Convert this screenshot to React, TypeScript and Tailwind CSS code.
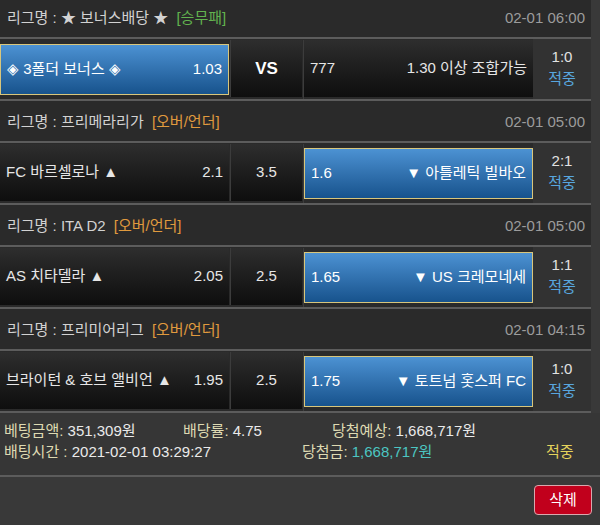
import React from "react";

interface Match {
  league: string;
  tag: string;
  tagColor: string;
  date: string;
  home: string;
  homeOdd: string;
  mid: string;
  midBold?: boolean;
  away: string;
  awayOdd: string;
  pick: "home" | "away";
  score: string;
}

const matches: Match[] = [
  {
    league: "★ 보너스배당 ★",
    tag: "[승무패]",
    tagColor: "text-[#62b34f]",
    date: "02-01 06:00",
    home: "◈ 3폴더 보너스 ◈",
    homeOdd: "1.03",
    mid: "VS",
    midBold: true,
    away: "1.30 이상 조합가능",
    awayOdd: "777",
    pick: "home",
    score: "1:0",
  },
  {
    league: "프리메라리가",
    tag: "[오버/언더]",
    tagColor: "text-[#e09a3e]",
    date: "02-01 05:00",
    home: "FC 바르셀로나 ▲",
    homeOdd: "2.1",
    mid: "3.5",
    away: "▼ 아틀레틱 빌바오",
    awayOdd: "1.6",
    pick: "away",
    score: "2:1",
  },
  {
    league: "ITA D2",
    tag: "[오버/언더]",
    tagColor: "text-[#e09a3e]",
    date: "02-01 05:00",
    home: "AS 치타델라 ▲",
    homeOdd: "2.05",
    mid: "2.5",
    away: "▼ US 크레모네세",
    awayOdd: "1.65",
    pick: "away",
    score: "1:1",
  },
  {
    league: "프리미어리그",
    tag: "[오버/언더]",
    tagColor: "text-[#e09a3e]",
    date: "02-01 04:15",
    home: "브라이턴 & 호브 앨비언 ▲",
    homeOdd: "1.95",
    mid: "2.5",
    away: "▼ 토트넘 홋스퍼 FC",
    awayOdd: "1.75",
    pick: "away",
    score: "1:0",
  },
];

// one odds box, blue with a gold edge when it is the picked side
function Cell({ selected, children }: { selected: boolean; children: React.ReactNode }) {
  if (selected) {
    return (
      <div className="w-[229px] h-[51px] mt-[4px] flex items-center justify-between px-[6px] border border-[#d8c67c] bg-gradient-to-b from-[#4c92d3] to-[#17538d] text-white">
        {children}
      </div>
    );
  }
  return (
    <div className="w-[229px] h-[57px] flex items-center justify-between px-[6px] bg-gradient-to-b from-[#2e2e2e] to-[#0e0e0e] text-[#e6e6e6]">
      {children}
    </div>
  );
}

export default function App() {
  return (
    <div
      className="w-[600px] h-[525px] overflow-hidden bg-[#393939] text-[15px]"
      style={{ fontFamily: '"Liberation Sans", "Noto Sans CJK KR", sans-serif' }}
    >
      <div className="-mt-[3px]">
        {matches.map((m, i) => (
          <div key={i}>
            {/* League header */}
            <div className="w-[591px] h-[42px] bg-[#2a2a2a] flex items-center justify-between pt-[3px] pl-[7px] pr-[6px] border-b-2 border-[#5c5c5c]">
              <div className="text-[#d2d2d2]">
                리그명 : {m.league} <span className={`ml-[4px] ${m.tagColor}`}>{m.tag}</span>
              </div>
              <div className="text-[#9c9c9c]">{m.date}</div>
            </div>
            {/* Match row */}
            <div className="w-[591px] h-[62px] flex bg-[#2a2a2a] pt-[1px] border-b-2 border-[#5c5c5c]">
              <Cell selected={m.pick === "home"}>
                <span>{m.home}</span>
                <span>{m.homeOdd}</span>
              </Cell>
              <div
                className={`w-[72px] h-[57px] ml-[1px] flex items-center justify-center bg-gradient-to-b from-[#2e2e2e] to-[#0e0e0e] border-l border-[#3c3c3c] ${
                  m.midBold ? "font-bold text-white text-[17px]" : "text-[#e6e6e6]"
                }`}
              >
                {m.mid}
              </div>
              <div className="ml-[1px] border-l border-[#3c3c3c]">
                <Cell selected={m.pick === "away"}>
                  <span>{m.awayOdd}</span>
                  <span>{m.away}</span>
                </Cell>
              </div>
              <div className="flex-1 bg-[#323232] -mt-[1px] flex flex-col items-center pt-[7px] gap-[1px] leading-[21px]">
                <span className="text-[#e2e2e2]">{m.score}</span>
                <span className="text-[#58a6df]">적중</span>
              </div>
            </div>
          </div>
        ))}
      </div>

      {/* Summary */}
      <div className="h-[64px] bg-[#363636] pl-[4px] pt-[7px] leading-[21px] border-b-2 border-[#5c5c5c]">
        <div className="flex">
          <div className="w-[179px]">
            <span className="text-[#dedab2]">베팅금액:</span> <span className="text-[#eaeaea]">351,309원</span>
          </div>
          <div className="w-[149px]">
            <span className="text-[#dedab2]">배당률:</span> <span className="text-[#eaeaea]">4.75</span>
          </div>
          <div>
            <span className="text-[#dedab2]">당첨예상:</span> <span className="text-[#eaeaea]">1,668,717원</span>
          </div>
        </div>
        <div className="flex">
          <div className="w-[298px]">
            <span className="text-[#dedab2]">배팅시간 :</span> <span className="text-[#eaeaea]">2021-02-01 03:29:27</span>
          </div>
          <div className="w-[244px]">
            <span className="text-[#dedab2]">당첨금:</span> <span className="text-[#4cc6c2]">1,668,717원</span>
          </div>
          <div className="text-[#e4d35c]">적중</div>
        </div>
      </div>

      {/* Actions */}
      <div className="flex justify-end pr-[8px] pt-[8px]">
        <button className="w-[58px] h-[30px] rounded-[4px] border border-[#d9a7ad] bg-[#c1001c] text-white text-[15px]">
          삭제
        </button>
      </div>
    </div>
  );
}
